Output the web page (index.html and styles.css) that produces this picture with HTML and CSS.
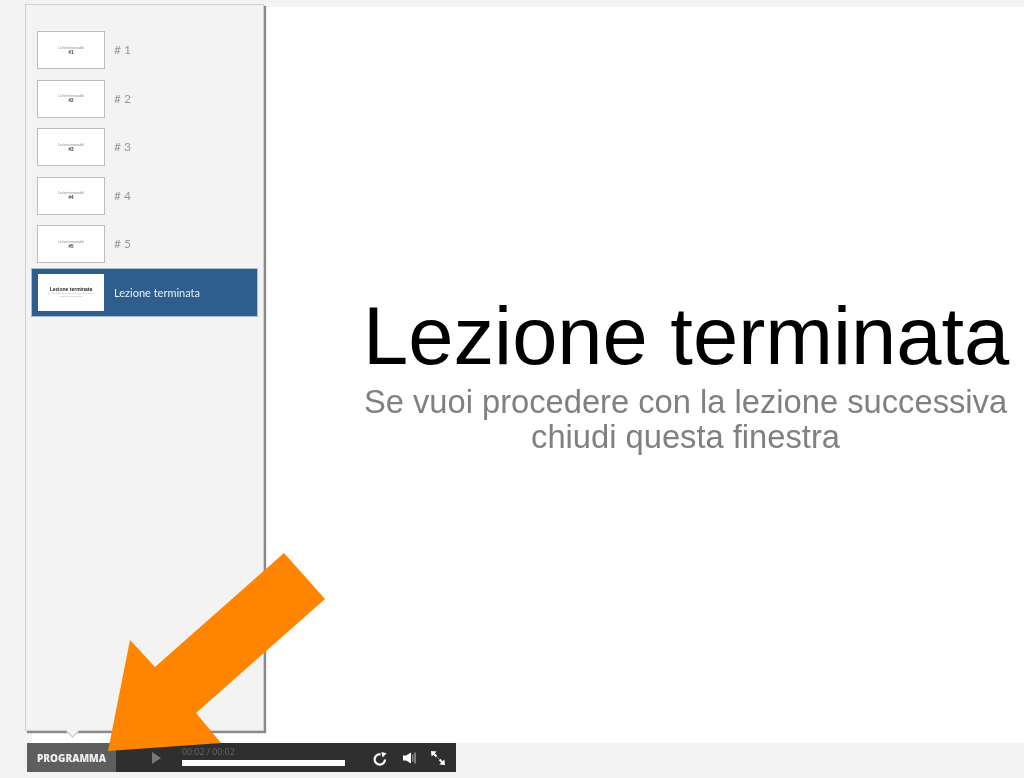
FILE: index.html
```html
<!DOCTYPE html>
<html lang="it">
<head>
    <meta charset="UTF-8">
    <meta name="viewport" content="width=device-width, initial-scale=1.0">
    <title>Lezione terminata</title>
    <link rel="stylesheet" href="styles.css">
</head>
<body>
    <div class="player">
        <div class="stage">
            <div class="slide-text">
                <h1 class="slide-title">Lezione terminata</h1>
                <p class="slide-sub">Se vuoi procedere con la lezione successiva<br>chiudi questa finestra</p>
            </div>
        </div>

        <div class="controls">
            <div class="menu-btn">PROGRAMMA</div>
            <div class="play-btn">
                <svg width="9" height="12" viewBox="0 0 9 12"><polygon points="0,0 9,6 0,12" fill="#777"/></svg>
            </div>
            <div class="timeline">
                <div class="time">00:02 / 00:02</div>
                <div class="progress"></div>
            </div>
            <div class="ctrl-icons">
                <svg class="icon icon-reload" width="16" height="16" viewBox="0 0 16 16">
                    <path d="M8.6 3.3A5.2 5.2 0 1 0 13 8.5" fill="none" stroke="#fff" stroke-width="2.2"/>
                    <polygon points="9.4,1 14.6,2.2 10.6,6.4" fill="#fff"/>
                </svg>
                <svg class="icon icon-volume" width="13" height="12" viewBox="0 0 13 12">
                    <polygon points="0,3.5 3,3.5 8,0.5 8,11.5 3,8.5 0,8.5" fill="#fff"/>
                    <path d="M9.8 2.5V9.5" stroke="#aaa" stroke-width="1"/>
                    <path d="M12 0.5V11.5" stroke="#ccc" stroke-width="1"/>
                </svg>
                <svg class="icon" width="14" height="14" viewBox="0 0 14 14">
                    <polygon points="0,0 5.6,0.6 0.6,5.6" fill="#fff"/>
                    <polygon points="14,14 8.4,13.4 13.4,8.4" fill="#fff"/>
                    <path d="M2.5 2.5L5.5 5.5M8.5 8.5L11.5 11.5" stroke="#fff" stroke-width="2"/>
                    <path d="M5.5 5.5L8.5 8.5" stroke="#888" stroke-width="1"/>
                </svg>
            </div>
        </div>

        <div class="outline">
            <div class="outline-item">
                <div class="thumb"><span class="thumb-top">Le fonti rinnovabili</span><b class="thumb-num">#1</b></div>
                <span class="item-label"># 1</span>
            </div>
            <div class="outline-item">
                <div class="thumb"><span class="thumb-top">Le fonti rinnovabili</span><b class="thumb-num">#2</b></div>
                <span class="item-label"># 2</span>
            </div>
            <div class="outline-item">
                <div class="thumb"><span class="thumb-top">Le fonti rinnovabili</span><b class="thumb-num">#3</b></div>
                <span class="item-label"># 3</span>
            </div>
            <div class="outline-item">
                <div class="thumb"><span class="thumb-top">Le fonti rinnovabili</span><b class="thumb-num">#4</b></div>
                <span class="item-label"># 4</span>
            </div>
            <div class="outline-item">
                <div class="thumb"><span class="thumb-top">Le fonti rinnovabili</span><b class="thumb-num">#5</b></div>
                <span class="item-label"># 5</span>
            </div>
            <div class="outline-item active">
                <div class="thumb"><b class="thumb-end">Lezione terminata</b><span class="thumb-line">Se vuoi procedere con la lezione successiva</span><span class="thumb-line">chiudi questa finestra</span></div>
                <span class="item-label">Lezione terminata</span>
            </div>
            <div class="outline-tip"></div>
        </div>
    </div>

    <svg class="arrow" width="1024" height="778" viewBox="0 0 1024 778">
        <polygon points="284,553 325,599 196,713 221,743 108,751 130,640 155,667" fill="#ff8400"/>
    </svg>
</body>
</html>
```

FILE: styles.css
```css
html, body {
    height: 100%;
}

body {
    margin: 0;
    background-color: #f3f3f3;
    font-family: 'Lato', sans-serif;
    overflow: hidden;
}

.player {
    padding: 7px 0 0 27px;
    filter: blur(0.35px);
}

.stage {
    background: #fff;
    height: 736px;
    margin-left: 5px;
    display: flex;
    justify-content: flex-end;
    padding-top: 288px;
    padding-right: 16px;
    box-sizing: border-box;
    font-family: 'Liberation Sans', Arial, sans-serif;
}

.slide-text {
    width: 645px;
    text-align: center;
}

.slide-title {
    margin: 0;
    font-size: 81.3px;
    font-weight: normal;
    line-height: 82px;
    white-space: nowrap;
    color: #000;
}

.slide-sub {
    margin: 7px -5px 0;
    font-size: 32.7px;
    line-height: 35px;
    white-space: nowrap;
    color: #808080;
}

.controls {
    display: flex;
    width: 429px;
    height: 29px;
    background: #2f2f2f;
    color: #fff;
}

.menu-btn {
    width: 89px;
    background: #5e5e5e;
    font-family: 'Open Sans', sans-serif;
    font-size: 10px;
    font-weight: 800;
    line-height: 30px;
    text-align: center;
    color: #eee;
}

.play-btn {
    width: 66px;
    display: flex;
    align-items: center;
    padding: 1px 0 0 36px;
    box-sizing: border-box;
}

.timeline {
    width: 163px;
}

.time {
    font-family: 'Open Sans', sans-serif;
    font-size: 8.8px;
    line-height: 12px;
    margin-top: 3px;
    color: #666;
}

.progress {
    height: 6px;
    margin-top: 2px;
    background: #fff;
}

.ctrl-icons {
    flex: 1;
    display: flex;
    align-items: center;
    gap: 15px;
    padding-left: 27px;
}

.icon-reload {
    margin-top: 3px;
}

.icon-volume {
    margin-top: 1px;
}

.outline {
    position: absolute;
    left: 25px;
    top: 4px;
    width: 239px;
    height: 727px;
    box-sizing: border-box;
    background: #f3f3f3;
    border: 1px solid #d0d0d0;
    box-shadow: 2px 2px 1px #8a8a8a;
    padding: 26px 5px 0 5px;
}

.outline-tip {
    position: absolute;
    left: 42px;
    bottom: -6px;
    width: 8px;
    height: 8px;
    background: #f3f3f3;
    border-right: 1px solid #c0c0c0;
    border-bottom: 1px solid #c0c0c0;
    transform: rotate(45deg);
}

.outline-item {
    display: flex;
    align-items: center;
    height: 38px;
    padding-left: 6px;
    margin-bottom: 10.6px;
}

.outline-item.active {
    height: 49px;
    margin-top: -6px;
    padding-left: 6px;
    background: #2d5e8e;
    border: 1px solid #a9bed3;
    box-sizing: border-box;
}

.thumb {
    width: 68px;
    height: 38px;
    box-sizing: border-box;
    background: #fff;
    border: 1px solid #bdbdbd;
    display: flex;
    flex-direction: column;
    align-items: center;
    justify-content: center;
    font-family: 'Liberation Sans', Arial, sans-serif;
    color: #333;
    flex-shrink: 0;
}

.active .thumb {
    width: 66px;
    height: 37px;
    border: none;
}

.thumb-top {
    font-size: 3.2px;
    line-height: 4px;
    color: #888;
}

.thumb-num {
    font-size: 4.5px;
    line-height: 5px;
}

.thumb-end {
    font-size: 5px;
    line-height: 6px;
    color: #222;
}

.thumb-line {
    font-size: 2.4px;
    line-height: 3px;
    color: #aaa;
}

.item-label {
    margin-left: 9px;
    margin-top: -1px;
    font-size: 12px;
    color: #929aa4;
}

.active .item-label {
    margin-left: 10px;
    margin-top: 0;
    font-size: 11px;
    color: #e9eef3;
}

.arrow {
    position: absolute;
    left: 0;
    top: 0;
    pointer-events: none;
}
```
